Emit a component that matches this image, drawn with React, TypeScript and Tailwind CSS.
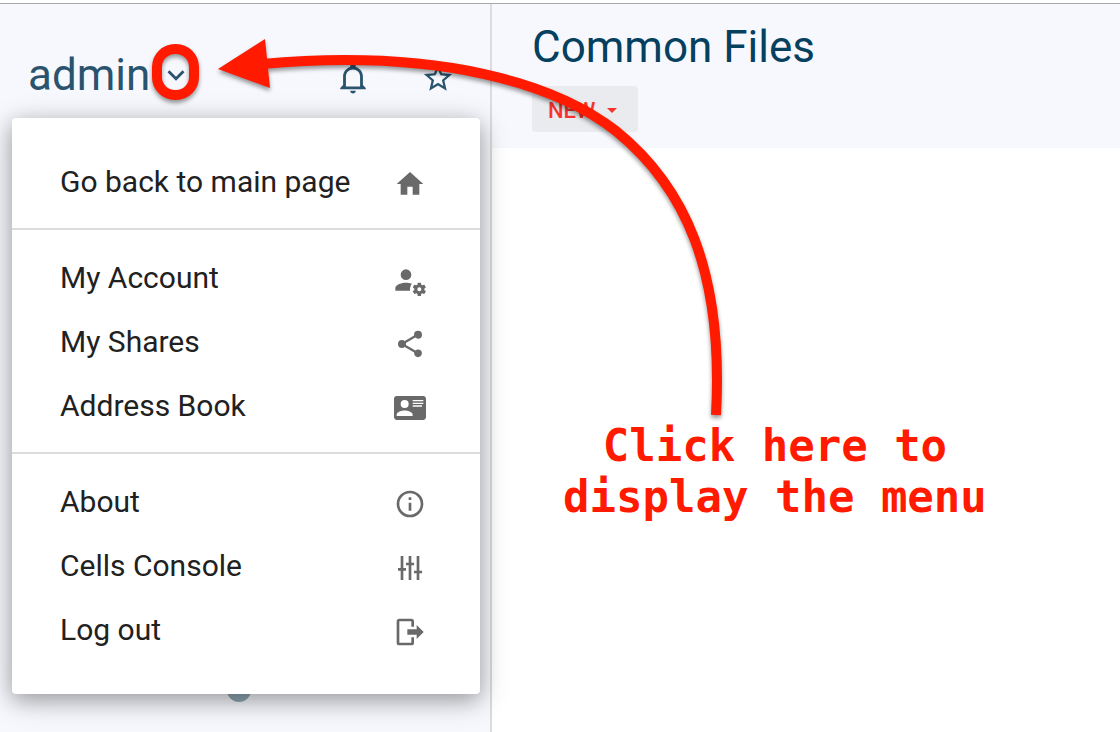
import React from "react";

const icons = {
  home: "M10,20V14H14V20H19V12H22L12,3L2,12H5V20H10Z",
  account:
    "M9,4A4,4 0 0,0 5,8A4,4 0 0,0 9,12A4,4 0 0,0 13,8A4,4 0 0,0 9,4M9,14C6.33,14 1,15.33 1,18V20H12.08C12.03,19.67 12,19.34 12,19C12,17.5 12.5,16 13.41,14.8C11.88,14.28 10.18,14 9,14M18,14C17.87,14 17.76,14.09 17.74,14.21L17.55,15.53C17.25,15.66 16.96,15.82 16.7,16L15.46,15.5C15.35,15.5 15.22,15.5 15.15,15.63L14.15,17.36C14.09,17.47 14.11,17.6 14.21,17.68L15.27,18.5C15.25,18.67 15.24,18.83 15.24,19C15.24,19.17 15.25,19.33 15.27,19.5L14.21,20.32C14.12,20.4 14.09,20.53 14.15,20.64L15.15,22.37C15.21,22.5 15.34,22.5 15.46,22.5L16.7,22C16.96,22.18 17.24,22.35 17.55,22.47L17.74,23.79C17.76,23.91 17.86,24 18,24H20C20.11,24 20.22,23.91 20.24,23.79L20.43,22.47C20.73,22.34 21,22.18 21.27,22L22.5,22.5C22.63,22.5 22.76,22.5 22.83,22.37L23.83,20.64C23.89,20.53 23.86,20.4 23.77,20.32L22.7,19.5C22.72,19.33 22.74,19.17 22.74,19C22.74,18.83 22.73,18.67 22.7,18.5L23.76,17.68C23.85,17.6 23.88,17.47 23.82,17.36L22.82,15.63C22.76,15.5 22.63,15.5 22.5,15.5L21.27,16C21,15.82 20.73,15.65 20.42,15.53L20.23,14.21C20.22,14.09 20.11,14 20,14M19,17.5A1.5,1.5 0 0,1 20.5,19C20.5,19.83 19.83,20.5 19,20.5C18.16,20.5 17.5,19.83 17.5,19A1.5,1.5 0 0,1 19,17.5Z",
  share:
    "M18,16.08C17.24,16.08 16.56,16.38 16.04,16.85L8.91,12.7C8.96,12.47 9,12.24 9,12C9,11.76 8.96,11.53 8.91,11.3L15.96,7.19C16.5,7.69 17.21,8 18,8A3,3 0 0,0 21,5A3,3 0 0,0 18,2A3,3 0 0,0 15,5C15,5.24 15.04,5.47 15.09,5.7L8.04,9.81C7.5,9.31 6.79,9 6,9A3,3 0 0,0 3,12A3,3 0 0,0 6,15C6.79,15 7.5,14.69 8.04,14.19L15.16,18.34C15.11,18.55 15.08,18.77 15.08,19C15.08,20.61 16.39,21.91 18,21.91C19.61,21.91 20.92,20.61 20.92,19A2.92,2.92 0 0,0 18,16.08Z",
  card: "M2,3H22C23.05,3 24,3.95 24,5V19C24,20.05 23.05,21 22,21H2C0.95,21 0,20.05 0,19V5C0,3.95 0.95,3 2,3M14,6V7H22V6H14M14,8V9H21.5L22,9V8H14M14,10V11H21V10H14M8,13.91C6,13.91 2,15 2,17V18H14V17C14,15 10,13.91 8,13.91M8,6A3,3 0 0,0 5,9A3,3 0 0,0 8,12A3,3 0 0,0 11,9A3,3 0 0,0 8,6Z",
  info: "M11,9H13V7H11M12,20C7.59,20 4,16.41 4,12C4,7.59 7.59,4 12,4C16.41,4 20,7.59 20,12C20,16.41 16.41,20 12,20M12,2A10,10 0 0,0 2,12A10,10 0 0,0 12,22A10,10 0 0,0 22,12A10,10 0 0,0 12,2M11,17H13V11H11V17Z",
  tune: "M5,3V12H3V14H5V21H7V14H9V12H7V3M11,3V8H9V10H11V21H13V10H15V8H13V3M17,3V14H15V16H17V21H19V16H21V14H19V3",
  logout:
    "M17,17.25V14H10V10H17V6.75L22.25,12L17,17.25M13,2A2,2 0 0,1 15,4V8H13V4H4V20H13V16H15V20A2,2 0 0,1 13,22H4A2,2 0 0,1 2,20V4A2,2 0 0,1 4,2H13Z",
  bell: "M10,21H14C14,22.1 13.1,23 12,23S10,22.1 10,21M21,19V20H3V19L5,17V11C5,7.9 7.03,5.17 10,4.29V4C10,2.9 10.9,2 12,2S14,2.9 14,4V4.29C16.97,5.17 19,7.9 19,11V17L21,19M17,11C17,8.24 14.76,6 12,6S7,8.24 7,11V18H17V11Z",
  star: "M12,15.39L8.24,17.66L9.23,13.38L5.91,10.5L10.29,10.13L12,6.09L13.71,10.13L18.09,10.5L14.77,13.38L15.76,17.66M22,9.24L14.81,8.63L12,2L9.19,8.63L2,9.24L7.45,13.97L5.82,21L12,17.27L18.18,21L16.54,13.97L22,9.24Z",
  chevron: "M7.41,8.58L12,13.17L16.59,8.58L18,10L12,16L6,10L7.41,8.58Z",
};

type IconName = keyof typeof icons;

function Icon({ name, className }: { name: IconName; className: string }) {
  return (
    <svg viewBox="0 0 24 24" fill="currentColor" aria-hidden="true" className={className}>
      <path d={icons[name]} />
    </svg>
  );
}

const groups: { label: string; icon: IconName }[][] = [
  [{ label: "Go back to main page", icon: "home" }],
  [
    { label: "My Account", icon: "account" },
    { label: "My Shares", icon: "share" },
    { label: "Address Book", icon: "card" },
  ],
  [
    { label: "About", icon: "info" },
    { label: "Cells Console", icon: "tune" },
    { label: "Log out", icon: "logout" },
  ],
];

function UserMenu() {
  return (
    <div
      role="menu"
      className="absolute top-[114px] left-3 z-10 w-[468px] rounded bg-white py-8 shadow-[0_6px_32px_rgba(0,0,0,0.2),0_6px_20px_rgba(0,0,0,0.24)]"
    >
      {groups.map((group, i) => (
        <React.Fragment key={i}>
          {i > 0 && <hr className="mt-3.5 mb-4 border-t-2 border-[#dcdcdc]" />}
          {group.map((item) => (
            <button
              key={item.label}
              role="menuitem"
              className="flex h-16 w-full items-center justify-between pr-[54px] pl-12 text-left text-[30px] text-[#212121]"
            >
              <span className="pb-0.5">{item.label}</span>
              <Icon name={item.icon} className="mt-1 size-8 text-[#696969]" />
            </button>
          ))}
        </React.Fragment>
      ))}
    </div>
  );
}

function Annotation() {
  return (
    <div className="pointer-events-none absolute inset-0 z-20">
      <svg
        width="740"
        height="430"
        viewBox="0 0 740 430"
        aria-hidden="true"
        className="drop-shadow-[0_3px_2px_rgba(0,0,0,0.4)]"
      >
        <rect x="157" y="49" width="37" height="46" rx="18" fill="none" stroke="#ff1a00" strokeWidth="10" />
        <path
          d="M716 415C724 270 684 186 616 131C556 84 440 48 262 64"
          fill="none"
          stroke="#ff1a00"
          strokeWidth="10"
        />
        <path d="M218 69L265 39L270 88Z" fill="#ff1a00" />
      </svg>
      <p className="absolute top-[420px] left-[563px] text-center font-['DejaVu_Sans_Mono',monospace] text-[44px] leading-[51px] font-bold whitespace-nowrap text-[#ff1a00]">
        Click here to
        <br />
        display the menu
      </p>
    </div>
  );
}

export default function App() {
  return (
    <div className="relative flex min-h-screen flex-col overflow-hidden bg-white pt-[3px] font-[Roboto,sans-serif]">
      <div className="flex flex-1 border-t border-[#a9a9ad]">
        <aside className="relative flex w-[492px] shrink-0 flex-col border-r-2 border-[#dcdcdc] bg-[#f7f8fd]">
          <div className="flex items-center pt-[45px] pr-[35px] pl-7 text-[#2a546e]">
            <span className="text-[44px] leading-[52px]">admin</span>
            <button aria-label="Open user menu" className="ml-[9px]">
              <Icon name="chevron" className="size-[34px]" />
            </button>
            <button aria-label="Notifications" className="mt-1.5 ml-auto">
              <Icon name="bell" className="size-[34px]" />
            </button>
            <button aria-label="Bookmarks" className="mt-1.5 ml-[51px]">
              <Icon name="star" className="size-[34px]" />
            </button>
          </div>
          <div className="mt-auto mb-[30px] ml-[227px] size-6 rounded-full bg-[#90a9b7]" />
          <UserMenu />
        </aside>
        <main className="flex-1">
          <header className="bg-[#f7f8fd] px-10 pt-[17px] pb-4">
            <h1 className="text-[44px] leading-[52px] text-[#05405f]">Common Files</h1>
            <button className="mt-[13px] flex h-[46px] items-center gap-3 rounded bg-[#eaebef] pt-0.5 pr-[21px] pl-4 text-[22px] font-medium text-[#f7342b]">
              NEW
              <svg width="10" height="5" viewBox="0 0 10 5" fill="currentColor" aria-hidden="true">
                <path d="M0 0H10L5 5Z" />
              </svg>
            </button>
          </header>
        </main>
      </div>
      <Annotation />
    </div>
  );
}
